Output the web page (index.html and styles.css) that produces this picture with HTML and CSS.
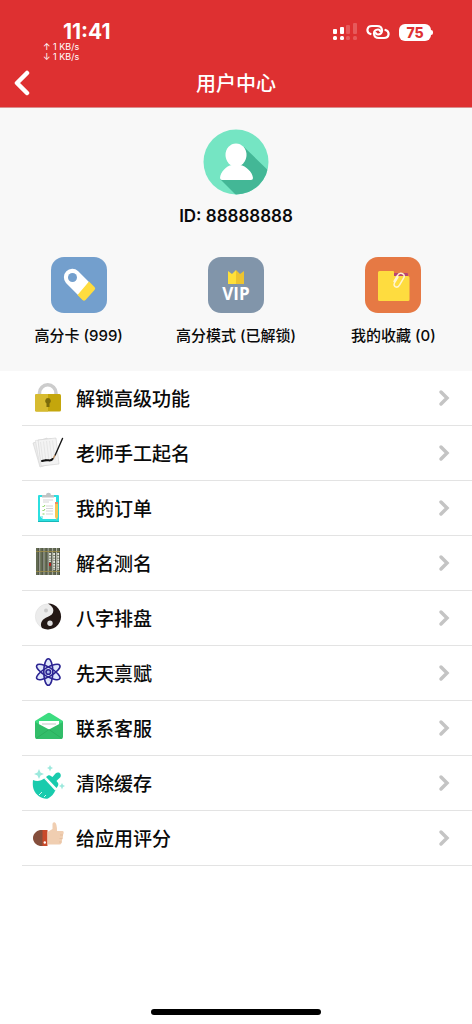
FILE: index.html
```html
<!DOCTYPE html>
<html lang="zh-CN">
<head>
<meta charset="utf-8">
<meta name="viewport" content="width=device-width, initial-scale=1">
<title>用户中心</title>
<link rel="stylesheet" href="styles.css">
</head>
<body>
<div class="app">
  <header class="header">
    <div class="status">
      <div class="status-left">
        <time class="clock">11:41</time>
        <div class="speed"><span>↑ 1 KB/s</span><span>↓ 1 KB/s</span></div>
      </div>
      <div class="status-right">
        <svg class="signal" viewBox="0 0 25 18" aria-hidden="true">
          <g fill="#fff"><rect x="1" y="6" width="4" height="5" rx="1"/><rect x="1" y="13" width="4" height="4" rx="1.5"/><rect x="8" y="4" width="4" height="7" rx="1"/><rect x="8" y="13" width="4" height="4" rx="1.5"/></g>
          <g fill="#e65a5b"><rect x="14" y="2" width="4" height="9" rx="1"/><rect x="14" y="13" width="4" height="4" rx="1.5"/><rect x="21" y="0" width="4" height="11" rx="1"/><rect x="21" y="13" width="4" height="4" rx="1.5"/></g>
        </svg>
        <svg class="link" viewBox="0 0 24 16" fill="none" stroke="#fff" stroke-width="2.2" stroke-linecap="round" aria-hidden="true">
          <path d="M4.500 10C0 8.500 .5 2 6 2H11C17.500 2 17.500 10.500 12 10.500C10.800 10.500 10 10 9.800 9"/>
          <path d="M19.500 6C24 7.500 23.500 14 18 14H13C6.500 14 6.500 5.500 12 5.500C13.200 5.500 14 6 14.200 7"/>
        </svg>
        <span class="battery">75</span>
      </div>
    </div>
    <div class="navbar">
      <button class="back" type="button" aria-label="返回">
        <svg viewBox="0 0 16 26" fill="none" stroke="#fff" stroke-width="4.500" stroke-linecap="round" stroke-linejoin="round"><path d="M13 3L3 13L13 23"/></svg>
      </button>
      <h1 class="title">用户中心</h1>
    </div>
  </header>

  <main class="main">
    <section class="profile">
      <svg class="avatar" viewBox="0 0 66 66" aria-hidden="true">
        <defs><clipPath id="disc"><circle cx="33" cy="33" r="32.500"/></clipPath></defs>
        <g clip-path="url(#disc)">
          <rect width="66" height="66" fill="#75e5c3"/>
          <path d="M41 18L70 46V70H37L17 50L30 36Z" fill="#43b796"/>
        </g>
        <ellipse cx="33" cy="26" rx="10.500" ry="11.500" fill="#fff"/>
        <path d="M29 33H37V36C43 37 49.500 43 50 49Q50 51 48 51H19Q17 51 17 49C17.500 43 23 37 29 36Z" fill="#fff"/>
      </svg>
      <p class="user-id">ID: 88888888</p>
      <div class="tiles">
        <a class="tile" href="#card">
          <svg viewBox="0 0 56 56" aria-hidden="true">
            <rect width="56" height="56" rx="13" fill="#739fcd"/>
            <path d="M15 26A8.500 8.500 0 0 1 27 14L38 25L28 39Z" fill="#fff"/>
            <path d="M38 24.500L43.500 30Q45 31.500 43.500 33L34.500 43Q33 44.500 31.500 43L26.500 38Z" fill="#fedc3f"/>
            <circle cx="21.500" cy="20.500" r="4.500" fill="#739fcd"/>
          </svg>
          <span>高分卡 (999)</span>
        </a>
        <a class="tile" href="#mode">
          <svg viewBox="0 0 56 56" aria-hidden="true">
            <rect width="56" height="56" rx="13" fill="#8195aa"/>
            <path d="M20 14L24 17L28 13V27H20Z" fill="#ffe039"/>
            <path d="M28 13L32 17L36 14V27H28Z" fill="#edc42f"/>
            <text class="vip" x="28" y="43" text-anchor="middle">VIP</text>
          </svg>
          <span>高分模式 (已解锁)</span>
        </a>
        <a class="tile" href="#favorites">
          <svg viewBox="0 0 56 56" aria-hidden="true">
            <rect width="56" height="56" rx="13" fill="#e67944"/>
            <rect x="28" y="16" width="15" height="10" rx="1" fill="#b94474"/>
            <path d="M14.500 14H28Q29 14 29 15V19H43Q44.500 19 44.500 20.500V42.500Q44.500 44 43 44H14.500Q13 44 13 42.500V15.500Q13 14 14.500 14Z" fill="#fedc3f"/>
            <path d="M29 24L32.500 18C34.500 14 40.500 16 39 20L34.500 27.500C32.500 31.500 27.500 29 29.500 25.500L33 19.500" transform="translate(0 .5)" fill="none" stroke="#fff4d0" stroke-width="1.500" stroke-linecap="round"/>
          </svg>
          <span>我的收藏 (0)</span>
        </a>
      </div>
    </section>

    <ul class="menu">
      <li><a class="row" href="#unlock">
        <svg class="icon" viewBox="0 0 32 32" aria-hidden="true">
          <path d="M7.500 13V11A8.200 8.200 0 0 1 24 11V13" fill="none" stroke="#ccc" stroke-width="3.500"/>
          <rect x="3" y="12" width="26" height="17.500" rx="1.500" fill="#c4a60c"/><path d="M4.500 12H16V29.500H4.500Q3 29.500 3 28V13.500Q3 12 4.500 12Z" fill="#d7bb30"/>
          <path d="M16 16A3 3 0 0 1 17.500 21.500V25H14.500V21.500A3 3 0 0 1 16 16Z" fill="#7b6b0b"/>
        </svg>
        <span class="label">解锁高级功能</span>
        <svg class="chevron" viewBox="0 0 10 16" aria-hidden="true"><path d="M2 2L8 8L2 14"/></svg>
      </a></li>
      <li><a class="row" href="#naming">
        <svg class="icon" viewBox="0 0 32 32" aria-hidden="true">
          <path d="M1 6L15 1L24 25L8 30Z" fill="#ececec" stroke="#d2d2d2" stroke-width=".6"/>
          <path d="M3.500 3.500L19 1.500L25 26L8 29.500Z" fill="#f7f7f7" stroke="#d8d8d8" stroke-width=".6"/>
          <path d="M6 3L24 1L27 27L9 29Z" fill="#f3f3f3" stroke="#d0d0d0" stroke-width=".6"/>
          <path d="M8.500 5L11 25M11.500 4.500L14 24.500M14.500 4L17 24M17.500 4L20 24M20.500 3.500L23 23" stroke="#dcdcdc" stroke-width=".6"/>
          <path d="M30.500 1.500L23 18.500" stroke="#171717" stroke-width="1.400" stroke-linecap="round"/><path d="M23 18L21 22" stroke="#b48b63" stroke-width="1.500"/>
          <path d="M20.500 22C19 25 16 22 10 24M10 24L14 23.200" fill="none" stroke="#111" stroke-width="2" stroke-linecap="round"/>
        </svg>
        <span class="label">老师手工起名</span>
        <svg class="chevron" viewBox="0 0 10 16" aria-hidden="true"><path d="M2 2L8 8L2 14"/></svg>
      </a></li>
      <li><a class="row" href="#orders">
        <svg class="icon" viewBox="0 0 32 32" aria-hidden="true">
          <rect x="6" y="3" width="21" height="27" rx="1" fill="#2cdfe0"/><path d="M6 29H27V30H6Z" fill="#18b8b9"/>
          <path d="M8 5H24V27H11L8 24Z" fill="#fff"/><path d="M8 24H11V27Z" fill="#9eeeed"/>
          <path d="M10 4.500V3H14Q14 .8 16.500 .8T19 3H22V5.500H10Z" fill="#bec4c4"/>
          <path d="M11 8H21M11 10H17M14 14H21M14 16.500H21M14 19H21M14 22H21" stroke="#d0d0d0" stroke-width=".9"/>
          <path d="M10.500 14L11.500 15L13 13M10.500 18L11.500 19L13 17M10.500 22H12.500" fill="none" stroke="#87d45d"/>
          <path d="M23 10H26V25L24.500 28L23 25Z" fill="#f6c653"/><rect x="23" y="10" width="3" height="2" fill="#ed8b60"/>
        </svg>
        <span class="label">我的订单</span>
        <svg class="chevron" viewBox="0 0 10 16" aria-hidden="true"><path d="M2 2L8 8L2 14"/></svg>
      </a></li>
      <li><a class="row" href="#analyze">
        <svg class="icon" viewBox="0 0 32 32" aria-hidden="true">
          <g fill="#636b52"><rect x="4" y="1" width="3.300" height="27"/><rect x="8.100" y="1" width="3.300" height="27"/><rect x="12.200" y="1" width="3.300" height="27"/><rect x="16.300" y="1" width="3.300" height="27"/><rect x="20.400" y="1" width="3.300" height="27"/><rect x="24.500" y="1" width="3.300" height="27"/></g>
          <path d="M7 1V28M11.100 1V28M15.200 1V28M19.300 1V28M23.400 1V28M27.500 1V28" stroke="#3e4037" stroke-width=".8"/>
          <path d="M4 4.500H28M4 24.500H28" stroke="#a18e49" stroke-width=".8"/>
          <path d="M18 6V15M22.100 6V23M26.200 6V23" stroke="#e6e6df" stroke-width="1.800" stroke-dasharray="2 .7"/><rect x="17" y="16" width="2" height="3" fill="#b4201e"/>
        </svg>
        <span class="label">解名测名</span>
        <svg class="chevron" viewBox="0 0 10 16" aria-hidden="true"><path d="M2 2L8 8L2 14"/></svg>
      </a></li>
      <li><a class="row" href="#bazi">
        <svg class="icon" viewBox="0 0 32 32" aria-hidden="true">
          <circle cx="16" cy="14.500" r="12.700" fill="#ececec" stroke="#dcdcdc" stroke-width=".5"/>
          <path d="M16 1.500A13 13 0 1 1 10 26C7 21 11 16.500 15.500 15C23 12.500 23.500 5.500 16 1.500Z" fill="#231815"/>
          <circle cx="14" cy="8.500" r="2" fill="#c9c9c9"/><circle cx="18" cy="21.300" r="2.700" fill="#dedede"/>
        </svg>
        <span class="label">八字排盘</span>
        <svg class="chevron" viewBox="0 0 10 16" aria-hidden="true"><path d="M2 2L8 8L2 14"/></svg>
      </a></li>
      <li><a class="row" href="#talent">
        <svg class="icon" viewBox="0 0 32 32" aria-hidden="true">
          <g fill="#dfe7fb"><ellipse cx="16.300" cy="15" rx="4.500" ry="13.300"/><ellipse cx="16.300" cy="15" rx="4.500" ry="13.300" transform="rotate(60 16.300 15)"/><ellipse cx="16.300" cy="15" rx="4.500" ry="13.300" transform="rotate(120 16.300 15)"/></g>
          <g fill="none" stroke="#2b2392" stroke-width="1.600"><ellipse cx="16.300" cy="15" rx="4.500" ry="13.300"/><ellipse cx="16.300" cy="15" rx="4.500" ry="13.300" transform="rotate(60 16.300 15)"/><ellipse cx="16.300" cy="15" rx="4.500" ry="13.300" transform="rotate(120 16.300 15)"/><circle cx="16.300" cy="15" r="2.300" fill="#aebff0"/></g>
        </svg>
        <span class="label">先天禀赋</span>
        <svg class="chevron" viewBox="0 0 10 16" aria-hidden="true"><path d="M2 2L8 8L2 14"/></svg>
      </a></li>
      <li><a class="row" href="#support">
        <svg class="icon" viewBox="0 0 32 32" aria-hidden="true">
          <path d="M3 9L15.500 1.200Q17 .4 18.500 1.200L31 9V18H3Z" fill="#3cdc80"/><path d="M7 9H27V17L17 21L7 17Z" fill="#fff"/><path d="M10 12H24" stroke="#e2e2e2" stroke-width="2"/>
          <path d="M3 10L17 17.500L31 10V25Q31 27 29 27H5Q3 27 3 25Z" fill="#32bd69"/><path d="M4 26.500L17 17.500L30 26.500" fill="none" stroke="#29a95b" stroke-width=".8"/>
        </svg>
        <span class="label">联系客服</span>
        <svg class="chevron" viewBox="0 0 10 16" aria-hidden="true"><path d="M2 2L8 8L2 14"/></svg>
      </a></li>
      <li><a class="row" href="#cache">
        <svg class="icon" viewBox="0 0 32 32" aria-hidden="true">
          <path d="M1 13C5 15 9 14 13 11L23.500 23C22 27 19 30 16 31.500C11 32.500 4 29 1.500 22C.6 19 .7 16 1 13Z" fill="#19cbad"/>
          <path d="M14 10L16 8.500C18 7.500 19 9 20.500 10L23.500 6.500C26 4 30 6 28.500 10C27.500 11.500 25.500 12.500 24.500 14C27 16.500 27 18 24.500 21Z" fill="#19cbad"/>
          <path d="M12.500 11L23.500 23" stroke="#fff" stroke-width="1.200"/><path d="M7 28L10 25M12 30L14 28" stroke="#fff" stroke-width=".8"/>
          <path d="M7 2L8.500 5.500L12 7L8.500 8.500L7 12L5.500 8.500L2 7L5.500 5.500ZM18-2L19 0L21 1L19 2L18 4.500L17 2L15 1L17 0ZM30 16L31 18L33 19L31 20L30 22.500L29 20L27 19L29 18Z" fill="#9ce9dd"/>
        </svg>
        <span class="label">清除缓存</span>
        <svg class="chevron" viewBox="0 0 10 16" aria-hidden="true"><path d="M2 2L8 8L2 14"/></svg>
      </a></li>
      <li><a class="row" href="#rate">
        <svg class="icon" viewBox="0 0 32 32" aria-hidden="true">
          <path d="M11 8V24H8C4 23 1 20 1 16S4 9 8 8Z" fill="#854f3c"/><rect x="10.500" y="8" width="5" height="16" fill="#c94a2a"/><circle cx="12.800" cy="20.500" r="1.200" fill="#fff"/>
          <path d="M15.500 10L20.500 7V2Q20.500 0 22.500 .2Q25 1 25 9H30.500Q32 9 31.700 11L31 13L30.800 16L30 18L29.500 21Q29 22.500 27.500 22.500H15.500Z" fill="#f0ceb1"/>
          <path d="M28 13H31M27.500 16.500H30.500M27 20H30" stroke="#dfb796" stroke-width=".6"/>
        </svg>
        <span class="label">给应用评分</span>
        <svg class="chevron" viewBox="0 0 10 16" aria-hidden="true"><path d="M2 2L8 8L2 14"/></svg>
      </a></li>
    </ul>
  </main>
  <footer class="home"><div class="home-bar"></div></footer>
</div>
</body>
</html>
```
FILE: styles.css
```css
* { box-sizing: border-box; }
body {
  margin: 0;
  background: #fff;
  color: #0a0a0a;
  font-family: Inter, "Noto Sans CJK SC", sans-serif;
}
.app { min-height: 100vh; display: flex; flex-direction: column; }
.header { background: #de3031; color: #fff; border-bottom: 1px solid #d98f8f; }
.status {
  display: flex;
  justify-content: space-between;
  align-items: flex-start;
  padding: 22px 41px 0 43px;
}
.clock { display: block; padding-left: 20px; font-size: 21px; line-height: 20px; font-weight: 700; }
.speed { display: flex; flex-direction: column; font-size: 9px; line-height: 10px; }
.status-right { display: flex; align-items: center; gap: 9px; height: 20px; }
.signal { width: 25px; height: 18px; }
.link { width: 24px; height: 16px; }
.battery {
  position: relative;
  width: 32px;
  border-radius: 6px;
  background: #fff;
  color: #de3031;
  font-size: 14px;
  line-height: 17px;
  font-weight: 800;
  text-align: center;
}
.battery::after {
  content: "";
  position: absolute;
  left: 100%;
  top: 6px;
  width: 2px;
  height: 5px;
  border-radius: 0 2px 2px 0;
  background: #fff;
}
.navbar {
  display: grid;
  grid-template-columns: 44px 1fr 44px;
  align-items: center;
  height: 45px;
  padding-bottom: 4px;
}
.back { border: 0; padding: 0 0 0 14px; background: none; text-align: left; }
.back svg { display: block; width: 16px; height: 26px; }
.title { margin: 0; padding-top: 2px; font-size: 20px; line-height: 28px; font-weight: 500; text-align: center; }
.main { flex: 1; }
.profile {
  display: flex;
  flex-direction: column;
  align-items: center;
  padding: 21px 0 25px;
  background: #f8f8f8;
}
.avatar { width: 66px; height: 66px; }
.user-id { margin: 10px 0 30px; font-size: 17px; line-height: 22px; font-weight: 600; }
.tiles { display: grid; grid-template-columns: repeat(3, 1fr); width: 100%; }
.tile {
  display: flex;
  flex-direction: column;
  align-items: center;
  gap: 13px;
  color: inherit;
  text-decoration: none;
  font-size: 15px;
  line-height: 20px;
  font-weight: 500;
}
.tile svg { width: 56px; height: 56px; }
.vip { font: 700 17px "Open Sans", sans-serif; fill: #fff; }
.menu { list-style: none; margin: 0; padding: 0 0 0 22px; }
.menu li { border-bottom: 1px solid #e3e3e3; }
.row {
  display: flex;
  align-items: center;
  height: 54px;
  padding: 0 23px 0 10px;
  color: inherit;
  text-decoration: none;
}
.icon { width: 32px; height: 32px; overflow: visible; }
.label { flex: 1; padding: 4px 0 0 12px; font-size: 19px; line-height: 28px; font-weight: 500; }
.chevron {
  width: 10px;
  height: 16px;
  fill: none;
  stroke: #c4c4c4;
  stroke-width: 3.5;
  stroke-linecap: round;
  overflow: visible;
}
.home { display: flex; justify-content: center; padding-bottom: 9px; }
.home-bar { width: 36%; height: 6px; border-radius: 3px; background: #000; }
```
